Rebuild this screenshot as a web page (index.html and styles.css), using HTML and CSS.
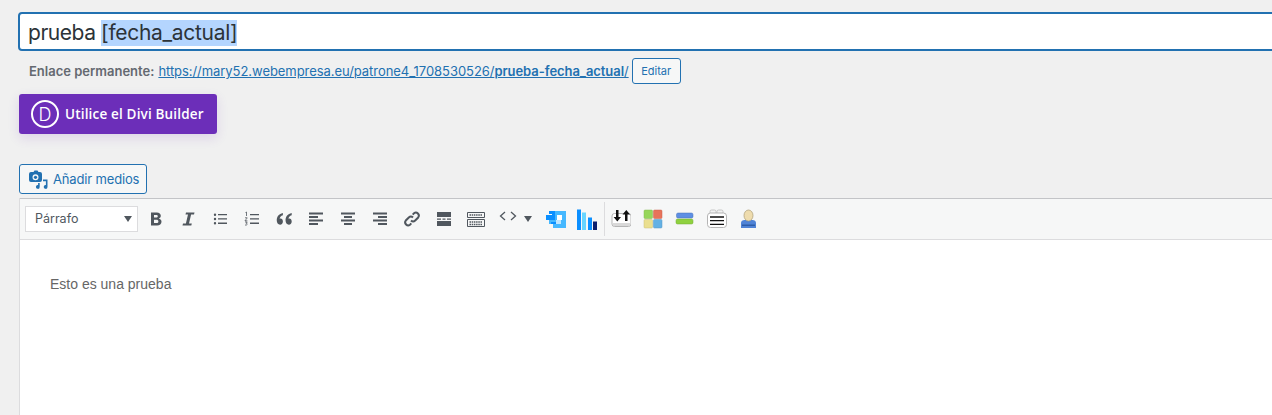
FILE: index.html
```html
<!DOCTYPE html>
<html lang="es">
<head>
<meta charset="utf-8">
<title>Editor</title>
<link rel="stylesheet" href="styles.css">
</head>
<body>
<main class="page">
  <div class="title-box"><span class="word">prueba </span><span class="sel">[fecha_actual]</span></div>
  <div class="permalink">
    <strong>Enlace permanente:</strong>
    <a href="#" class="plink">https://mary52.webempresa.eu/patrone4_1708530526/<b>prueba-fecha_actual</b>/</a>
    <button class="btn small">Editar</button>
  </div>
  <button class="divi"><span class="divi-logo">D</span><span>Utilice el Divi Builder</span></button>
  <button class="btn media">
    <svg class="i20" viewBox="0 0 20 20"><path fill="#2271b1" fill-rule="evenodd" d="M3 3h2.500l1-1.500h3l1 1.500H12a2 2 0 0 1 2 2v6a2 2 0 0 1-2 2H3a2 2 0 0 1-2-2V5a2 2 0 0 1 2-2zm4.500 2.300a3 3 0 1 0 0 6 3 3 0 0 0 0-6z"/><circle cx="7.500" cy="8.300" r="1.600" fill="#2271b1"/><path fill="#2271b1" d="M14 10.500h5.500v7.500a1.900 1.900 0 1 1-1.600-1.900v-3.800H15v-1.800zM11.700 14v4a1.900 1.900 0 1 1-1.600-1.900V14z"/></svg>
    <span>Añadir medios</span>
  </button>
  <section class="editor">
    <div class="toolbar">
      <div class="select"><span>Párrafo</span><i class="caret"></i></div>
      <div class="tools">
        <svg class="tool" viewBox="0 0 20 20"><path fill="#50575e" d="M5 3.500h5.800c2.500 0 4 1.300 4 3.200 0 1.300-.7 2.300-2 2.800 1.600.4 2.700 1.600 2.700 3.200 0 2.200-1.800 3.800-4.400 3.800H5zm3 2.400v2.700h2.100c1.100 0 1.700-.5 1.700-1.400s-.6-1.300-1.700-1.300zm0 4.800v3.400h2.500c1.200 0 1.900-.6 1.900-1.700s-.7-1.700-1.900-1.700z"/></svg>
        <svg class="tool" viewBox="0 0 20 20"><path fill="#50575e" d="M8 3.500h8.500L16 5.600h-2.900L11 14.400h2.800l-.5 2.100H4.500l.5-2.100h2.900L10 5.600H7.500z"/></svg>
        <svg class="tool" viewBox="0 0 20 20"><path fill="#50575e" d="M5 4.500a1.200 1.200 0 1 1 0 2.400 1.200 1.200 0 0 1 0-2.400zm0 4.300a1.200 1.200 0 1 1 0 2.400 1.200 1.200 0 0 1 0-2.400zm0 4.300a1.200 1.200 0 1 1 0 2.400 1.200 1.200 0 0 1 0-2.400zM8 5h9v1.300H8zm0 4.300h9v1.300H8zm0 4.300h9v1.300H8z"/></svg>
        <svg class="tool" viewBox="0 0 20 20"><path fill="#50575e" d="M8 5h9v1.300H8zm0 4.300h9v1.300H8zm0 4.300h9v1.300H8z"/><path fill="none" stroke="#50575e" stroke-width=".8" d="M3.500 3.500l1-.5v4M3 8.800h2.200c.3 1-2.200 1.800-2.200 3h2.400M3 13h2.200l-1 1.300c1.600 0 1.500 2.200-1.200 1.700"/></svg>
        <svg class="tool" viewBox="0 0 20 20"><path fill="#50575e" transform="translate(-1 -3.200) scale(1.100 1.300)" d="M9 5.500v1.700c-2 .5-2.800 1.500-3 2.700 1.700-.5 3 .6 3 2.100 0 1.400-1 2.500-2.600 2.500-1.800 0-3-1.400-3-3.400 0-2.900 2-5 5.600-5.600zm8 0v1.700c-2 .5-2.800 1.500-3 2.700 1.700-.5 3 .6 3 2.100 0 1.400-1 2.500-2.600 2.500-1.800 0-3-1.400-3-3.400 0-2.900 2-5 5.600-5.600z"/></svg>
        <svg class="tool" viewBox="0 0 20 20"><path fill="#50575e" d="M3 3.500h14v2H3zm0 3.500h9v2H3zm0 3.500h14v2H3zm0 3.500h9v2H3z"/></svg>
        <svg class="tool" viewBox="0 0 20 20"><path fill="#50575e" d="M3 3.500h14v2H3zM6 7h8v2H6zM3 10.500h14v2H3zM6 14h8v2H6z"/></svg>
        <svg class="tool" viewBox="0 0 20 20"><path fill="#50575e" d="M3 3.500h14v2H3zM8 7h9v2H8zM3 10.500h14v2H3zM8 14h9v2H8z"/></svg>
        <svg class="tool" viewBox="0 0 20 20"><path fill="none" stroke="#50575e" stroke-width="2" d="M9 11.500a3 3 0 0 0 4.200 0l3-3a3 3 0 0 0-4.200-4.200l-1.300 1.300M11 8.500a3 3 0 0 0-4.200 0l-3 3a3 3 0 0 0 4.200 4.200l1.300-1.300"/></svg>
        <svg class="tool" viewBox="0 0 20 20"><path fill="#50575e" d="M3 3h14v5H3zM3 9.500h4v1.300H3zm5.500 0h3v1.300h-3zm4.500 0h4v1.300h-4zM3 12h14v5H3z"/></svg>
        <svg class="tool" viewBox="0 0 20 20"><path fill="#f6f7f7" stroke="#50575e" d="M1.500 3.500h17v5h-17zM1.500 10.500h17v7h-17z"/><path fill="none" stroke="#50575e" stroke-width="1.500" stroke-dasharray="1.500 .7" d="M3.500 6h13M3.500 13h13M3.500 15.500h13"/></svg>
        <span class="code-tool">
          <svg class="code" viewBox="0 0 20 12"><path fill="none" stroke="#50575e" stroke-width="1.300" d="M7 2L2.500 6 7 10M13 2l4.500 4L13 10"/></svg>
          <i class="caret dark"></i>
        </span>
      </div>
      <div class="plugin-a">
        <svg class="tool plug" viewBox="0 0 22 21"><path fill="#45b8ff" d="M7 2h14v17H8v-4H4v-4h3z"/><path fill="#0a8fff" d="M1 6h9v5H6v2h5v2H6v-4H1z"/><path fill="#0a8fff" d="M4 2h6v4H7v-1H4z"/><path fill="#fff" d="M12 6h5v5h-5z"/><path fill="#bfe6ff" d="M11 11h5v4h-5z"/></svg>
        <svg class="tool plug" viewBox="0 0 22 21"><path fill="#0a8fff" d="M1 .5h4V21H1z"/><path fill="#66d4ff" d="M6 3.500h4V21H6z"/><path fill="#0a8fff" d="M12 8.500h4V21h-4z"/><path fill="#0b1f6e" d="M17 12.500h4V21h-4z"/></svg>
      </div>
      <div class="plugin-b">
        <svg class="tool" viewBox="0 0 20 20"><rect x="1" y="4.500" width="19" height="13" rx="2.500" fill="#fff" stroke="#b5b5b5"/><path fill="#d9d9d9" d="M2 14h17v3H2z"/><path fill="#111" d="M5 1h2.500v7H10l-3.700 4.500L2.600 8H5zM14 12h2.500V5.500h2.600L15.300 1l-3.800 4.500H14z"/></svg>
        <svg class="tool" viewBox="0 0 20 20"><rect x="1" y="1" width="8.500" height="8.500" rx="1" fill="#96d65a" stroke="#84b950" stroke-width=".5"/><rect x="10.500" y="1" width="8.500" height="8.500" rx="1" fill="#e8735a" stroke="#c9634d" stroke-width=".5"/><rect x="1" y="10.500" width="8.500" height="8.500" rx="1" fill="#eadf8f" stroke="#c8bd76" stroke-width=".5"/><rect x="10.500" y="10.500" width="8.500" height="8.500" rx="1" fill="#63b1e4" stroke="#5597c4" stroke-width=".5"/></svg>
        <svg class="tool" viewBox="0 0 20 20"><rect x="1.500" y="4" width="16.500" height="5" rx="1.500" fill="#5e8fe4" stroke="#4670bb" stroke-width=".5"/><rect x="1" y="10" width="17" height="5" rx="1.500" fill="#8fd13f" stroke="#72a933" stroke-width=".5"/></svg>
        <svg class="tool" viewBox="0 0 20 20"><rect x="3" y="1" width="6" height="5" rx="1.500" fill="#f2f2f2" stroke="#bbb" stroke-width=".8"/><rect x="10" y="1" width="6" height="5" rx="1.500" fill="#f2f2f2" stroke="#bbb" stroke-width=".8"/><rect x=".5" y="4" width="19" height="14.500" rx="3" fill="#fff" stroke="#b5b5b5"/><path stroke="#111" stroke-width="1.300" d="M3 8h14M3 11.700h14M3 15.300h14"/></svg>
        <svg class="tool" viewBox="0 0 20 20"><path fill="#4f83d6" d="M2 19v-5c0-2 1.500-3 3.500-3h8c2 0 3.500 1 3.500 3v5z"/><ellipse cx="9.500" cy="6.500" rx="4.500" ry="5.500" fill="#eedcae" stroke="#a99b74" stroke-width=".7"/><path fill="#2e5da8" d="M3 15.500h13V17H3z"/></svg>
      </div>
    </div>
    <div class="content"><p>Esto es una prueba</p></div>
  </section>
</main>
</body>
</html>
```

FILE: styles.css
```css
* { box-sizing: border-box; }
html, body { margin: 0; height: 100%; }
body {
  background: #f0f0f0;
  font-family: Inter, "Noto Sans", sans-serif;
  color: #1d2327;
  overflow: hidden;
}
.page {
  padding: 12px 0 0 18px;
  display: flex;
  flex-direction: column;
  align-items: flex-start;
  height: 415px;
  width: 1272px;
}
.title-box {
  width: 1300px;
  height: 39px;
  border: 2px solid #2271b1;
  border-radius: 4px;
  background: #fff;
  padding-left: 8px;
  font-size: 21px;
  line-height: 38px;
  color: #2c3338;
  white-space: nowrap;
  letter-spacing: -0.3px;
}
.word { letter-spacing: -0.45px; }
.sel { background: #b4d5fe; display: inline-block; height: 26px; line-height: 26px; }
.permalink {
  display: flex;
  align-items: center;
  margin: 7px 0 0 11px;
  height: 26px;
  font-size: 13px;
  color: #646970;
  white-space: nowrap;
}
.permalink strong { font-weight: 600; margin-right: 4px; }
.plink { color: #2271b1; margin-right: 3px; letter-spacing: -0.055px; }
.plink b { font-weight: 600; }
.btn {
  display: flex;
  align-items: center;
  border: 1px solid #2271b1;
  border-radius: 3px;
  background: #f6f7f7;
  color: #2271b1;
  font-family: inherit;
  padding: 0;
}
.small { height: 26px; width: 49px; justify-content: center; font-size: 11px; }
.divi {
  display: flex;
  align-items: center;
  gap: 6px;
  margin: 10px 0 0 1px;
  width: 198px;
  height: 40px;
  padding: 0 0 0 12px;
  background: #6c2eb9;
  color: #fff;
  border: 0;
  border-radius: 3px;
  box-shadow: 0 4px 12px rgba(108, 46, 185, .14);
  font-family: "Open Sans", sans-serif;
  font-size: 13.500px;
  font-weight: 600;
  letter-spacing: .17px;
}
.divi-logo {
  width: 28px;
  height: 28px;
  border: 2px solid #fff;
  border-radius: 50%;
  display: flex;
  align-items: center;
  justify-content: center;
  font-family: Inter, sans-serif;
  font-size: 18px;
  font-weight: 300;
}
.media {
  margin: 30px 0 0 1px;
  width: 128px;
  height: 30px;
  padding-left: 8px;
  gap: 5px;
  font-size: 13px;
  letter-spacing: -0.16px;
}
.i20 { width: 20px; height: 20px; flex: none; }
.editor {
  margin: 4px 0 0 1px;
  width: 1260px;
  flex: 1;
  background: #fff;
  border-left: 1px solid #dcdcde;
  display: flex;
  flex-direction: column;
}
.toolbar {
  height: 42px;
  display: flex;
  align-items: center;
  background: #f6f7f7;
  border-top: 1px solid #c3c4c7;
  border-bottom: 1px solid #dcdcde;
  padding-left: 5px;
}
.select {
  width: 113px;
  height: 26px;
  background: #fff;
  border: 1px solid #dcdcde;
  display: flex;
  align-items: center;
  justify-content: space-between;
  padding: 0 5px 2px 9px;
  font-size: 12.500px;
  color: #50575e;
}
.caret {
  width: 0;
  height: 0;
  border-left: 4.500px solid transparent;
  border-right: 4.500px solid transparent;
  border-top: 6px solid #50575e;
}
.select .caret { margin-top: 2px; }
.tools { display: flex; align-items: center; margin-left: 8px; gap: 12px; }
.tool { width: 20px; height: 20px; flex: none; display: block; }
.code-tool { display: flex; align-items: center; gap: 6px; }
.code { width: 20px; height: 12px; display: block; margin-top: -6px; }
.plugin-a { display: flex; align-items: center; gap: 9px; margin-left: 13px; padding-right: 6px; border-right: 1px solid #dcdcde; height: 34px; }
.plug { width: 22px; height: 21px; }
.plugin-b { display: flex; align-items: center; gap: 12px; margin-left: 6px; }
.content { flex: 1; padding: 34px 30px; font-family: "Liberation Sans", Arial, sans-serif; font-size: 14px; color: #666; }
.content p { margin: 0; line-height: 20px; }
```
